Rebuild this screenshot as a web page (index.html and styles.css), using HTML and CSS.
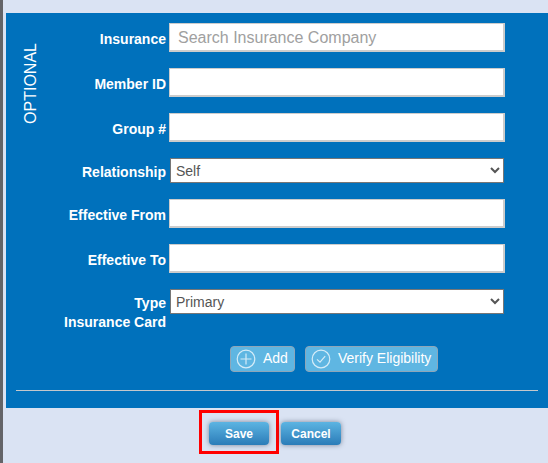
FILE: index.html
```html
<!DOCTYPE html>
<html lang="en">
<head>
    <meta charset="UTF-8">
    <meta name="viewport" content="width=device-width, initial-scale=1.0">
    <title>Insurance</title>
    <link rel="stylesheet" href="styles.css">
</head>
<body>

<div class="page">
    <div class="panel">
        <div class="panel-body">
            <div class="legend"><span>OPTIONAL</span></div>

            <div class="fields">
                <div class="row">
                    <label class="row-label">Insurance</label>
                    <input type="text" class="field" placeholder="Search Insurance Company">
                </div>
                <div class="row">
                    <label class="row-label">Member ID</label>
                    <input type="text" class="field">
                </div>
                <div class="row">
                    <label class="row-label">Group #</label>
                    <input type="text" class="field">
                </div>
                <div class="row row-select">
                    <label class="row-label">Relationship</label>
                    <select class="field-select">
                        <option>Self</option>
                    </select>
                </div>
                <div class="row">
                    <label class="row-label">Effective From</label>
                    <input type="text" class="field">
                </div>
                <div class="row">
                    <label class="row-label">Effective To</label>
                    <input type="text" class="field">
                </div>
                <div class="row row-select row-type">
                    <label class="row-label">Type<br>Insurance Card</label>
                    <select class="field-select">
                        <option>Primary</option>
                    </select>
                </div>
            </div>
        </div>

        <div class="actions">
            <button class="btn-light">
                <svg class="btn-icon" viewBox="0 0 20 20">
                    <circle cx="10" cy="10" r="8.8"/>
                    <path d="M10 4.5V15.5M4.5 10H15.5"/>
                </svg>
                Add
            </button>
            <button class="btn-light">
                <svg class="btn-icon" viewBox="0 0 20 20">
                    <circle cx="10" cy="10" r="8.8"/>
                    <path d="M6 10.4L9 13.2L14.2 7.2"/>
                </svg>
                Verify Eligibility
            </button>
        </div>

        <hr class="divider">
    </div>

    <div class="footer">
        <div class="highlight">
            <button class="btn-main">Save</button>
        </div>
        <button class="btn-main btn-cancel">Cancel</button>
    </div>
</div>

</body>
</html>
```

FILE: styles.css
```css
html, body {
    margin: 0;
    height: 100%;
    overflow: hidden;
}

body {
    font-family: 'Liberation Sans', Arial, sans-serif;
    background-color: #dae3f3;
}

.page {
    height: 100%;
    box-sizing: border-box;
    border-left: 3px solid #636468;
    padding: 13px 0 0 3px;
}

/* Panel biru */
.panel {
    height: 395px;
    box-sizing: border-box;
    background-color: #0071bc;
    padding: 10px 10px 0 10px;
}

.panel-body {
    display: flex;
}

.legend {
    width: 22px;
    padding: 20px 0 0 8px;
    box-sizing: border-box;
    color: #fff;
    font-size: 16px;
    line-height: 14px;
}

.legend span {
    display: block;
    writing-mode: vertical-rl;
    transform: rotate(180deg);
}

.fields {
    flex: 1;
    display: flex;
    flex-direction: column;
    gap: 16px;
}

.row {
    display: flex;
    align-items: center;
}

.row-label {
    width: 128px;
    margin-right: 3px;
    padding-top: 2px;
    text-align: right;
    color: #fff;
    font-size: 14px;
    font-weight: bold;
}

.field {
    width: 336px;
    height: 29px;
    box-sizing: border-box;
    border: 2px solid #ccc;
    border-width: 1px 2px 2px 1px;
    background-color: #fff;
    padding: 2px 8px 0 8px;
    font-family: inherit;
    font-size: 16px;
}

.field::placeholder {
    color: #a0a0a0;
}

.field-select {
    width: 334px;
    height: 25px;
    margin-left: 1px;
    padding-left: 1px;
    box-sizing: border-box;
    background-color: #fff;
    color: #555;
    font-family: inherit;
    font-size: 14px;
}

.row-type {
    align-items: flex-start;
}

.row-type .row-label {
    line-height: 19px;
    margin-top: 3px;
}

.actions {
    display: flex;
    gap: 10px;
    margin-top: 14px;
    padding-left: 214px;
}

.btn-light {
    display: flex;
    align-items: center;
    gap: 7px;
    height: 26px;
    box-sizing: border-box;
    padding: 0 6px 3px 5px;
    border: 1px solid #8fa6b8;
    border-radius: 4px;
    background-color: #5fb6e2;
    color: #fff;
    font-family: inherit;
    font-size: 14px;
}

.btn-icon {
    width: 20px;
    height: 20px;
    margin-top: 3px;
    fill: none;
    stroke: #d5ecf8;
    stroke-width: 1.2;
}

.divider {
    margin: 18px 0 0 0;
    border: none;
    border-top: 1px solid #c4c8cc;
}

/* Tombol bawah */
.footer {
    display: flex;
    align-items: flex-start;
    gap: 2px;
    padding: 2px 0 0 193px;
}

.highlight {
    border: 3px solid #f00;
    padding: 9px 7px 6px 7px;
}

.btn-main {
    display: block;
    width: 60px;
    height: 23px;
    border: none;
    border-radius: 4px;
    background: linear-gradient(#5cb4e2, #2b7cb8);
    box-shadow: 0 0 5px rgba(60, 70, 90, 0.6);
    color: #fff;
    font-family: inherit;
    font-size: 12px;
    font-weight: bold;
    padding: 0;
}

.btn-cancel {
    margin-top: 12px;
}
```
